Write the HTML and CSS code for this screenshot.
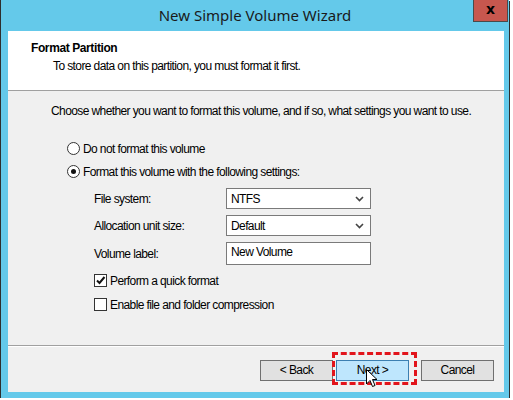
FILE: index.html
```html
<!DOCTYPE html>
<html lang="en">
<head>
    <meta charset="UTF-8">
    <title>New Simple Volume Wizard</title>
    <link rel="stylesheet" href="styles.css">
</head>
<body>
    <div class="window">
        <div class="titlebar">
            <span></span>
            <span class="title">New Simple Volume Wizard</span>
            <span class="close-btn">x</span>
        </div>

        <div class="client">
            <div class="wizard-header">
                <div class="header-title">Format Partition</div>
                <div class="header-sub">To store data on this partition, you must format it first.</div>
            </div>

            <div class="wizard-body">
                <p class="intro">Choose whether you want to format this volume, and if so, what settings you want to use.</p>

                <div class="option">
                    <span class="radio"></span>
                    <span>Do not format this volume</span>
                </div>
                <div class="option">
                    <span class="radio checked"></span>
                    <span>Format this volume with the following settings:</span>
                </div>

                <div class="settings">
                    <div class="field">
                        <span class="field-label">File system:</span>
                        <div class="combo">
                            <span>NTFS</span>
                            <svg class="chev" width="9" height="6" viewBox="0 0 9 6"><path d="M1 1 L4.5 4.5 L8 1" fill="none" stroke="#444" stroke-width="1.6"/></svg>
                        </div>
                    </div>
                    <div class="field">
                        <span class="field-label">Allocation unit size:</span>
                        <div class="combo">
                            <span>Default</span>
                            <svg class="chev" width="9" height="6" viewBox="0 0 9 6"><path d="M1 1 L4.5 4.5 L8 1" fill="none" stroke="#444" stroke-width="1.6"/></svg>
                        </div>
                    </div>
                    <div class="field">
                        <span class="field-label">Volume label:</span>
                        <div class="textbox">New Volume</div>
                    </div>

                    <div class="check-row first">
                        <span class="checkbox">
                            <svg width="11" height="11" viewBox="0 0 11 11"><path d="M2 5.5 L4.5 8 L9.5 2" fill="none" stroke="#111" stroke-width="2"/></svg>
                        </span>
                        <span>Perform a quick format</span>
                    </div>
                    <div class="check-row">
                        <span class="checkbox"></span>
                        <span>Enable file and folder compression</span>
                    </div>
                </div>
            </div>

            <div class="wizard-footer">
                <span class="btn">&lt; Back</span>
                <span class="next-wrap">
                    <span class="btn btn-default">Next &gt;</span>
                    <span class="highlight"></span>
                    <svg class="cursor" width="13" height="20" viewBox="0 0 13 20">
                        <path d="M0.5 0.5 L0.5 15 L4 11.5 L6.5 17.5 L9 16.5 L6.5 10.5 L11 10.5 Z" fill="#fff" stroke="#000" stroke-width="1"/>
                    </svg>
                </span>
                <span class="btn">Cancel</span>
            </div>
        </div>
    </div>
</body>
</html>
```

FILE: styles.css
```css
/* Ventana del asistente */
body, html {
    margin: 0;
    padding: 0;
    background-color: #ffffff;
    font-family: "Liberation Sans", Arial, sans-serif;
    font-size: 12px;
    letter-spacing: -0.6px;
    color: #000;
}

.window {
    width: 508px;
    height: 398px;
    background-color: #64c9ea;
    border-left: 1px solid #2e2e2e;
    box-shadow: 1px 1px 0 #2e2e2e;
    display: flex;
    flex-direction: column;
}

/* Barra de titulo */
.titlebar {
    height: 31px;
    display: grid;
    grid-template-columns: 1fr auto 1fr;
    align-items: start;
}

.title {
    font-family: "Noto Sans", sans-serif;
    font-size: 15px;
    letter-spacing: 0;
    color: #1a1a1a;
    line-height: 30px;
}

.close-btn {
    justify-self: end;
    width: 33px;
    height: 21px;
    margin-right: 1px;
    background-color: #c7574e;
    border: 1px solid #4a4a4a;
    border-top: 0;
    color: #000;
    font-family: "DejaVu Sans", sans-serif;
    font-weight: bold;
    font-size: 14px;
    letter-spacing: 0;
    line-height: 19px;
    text-align: center;
}

/* Area cliente */
.client {
    flex: 1;
    margin: 0 5px 6px 7px;
    background-color: #f0f0f0;
    display: flex;
    flex-direction: column;
}

.wizard-header {
    height: 60px;
    background-color: #ffffff;
    border-bottom: 1px solid #a0a0a0;
    padding: 9px 0 0 23px;
    box-sizing: border-box;
}

.header-title {
    font-weight: bold;
    line-height: 16px;
    letter-spacing: -0.4px;
}

.header-sub {
    padding-left: 22px;
    margin-top: 3px;
}

.wizard-body {
    flex: 1;
    padding: 0 0 0 43px;
}

.intro {
    margin: 13px 0 24px 0;
}

.option {
    display: flex;
    align-items: center;
    margin-left: 16px;
    height: 13px;
    margin-bottom: 10px;
}

.radio {
    width: 11px;
    height: 11px;
    border: 1px solid #333;
    border-radius: 50%;
    background-color: #fff;
    margin-right: 3px;
    display: flex;
    align-items: center;
    justify-content: center;
}

.radio.checked::after {
    content: "";
    width: 5px;
    height: 5px;
    border-radius: 50%;
    background-color: #111;
}

.settings {
    margin-left: 43px;
}

.field {
    display: flex;
    align-items: center;
    margin-bottom: 6px;
}

.field-label {
    width: 132px;
}

.combo, .textbox {
    width: 145px;
    height: 21px;
    border: 1px solid #7a7a7a;
    background-color: #fff;
    display: flex;
    align-items: center;
    justify-content: space-between;
    padding: 0 6px 0 4px;
    box-sizing: border-box;
}

.textbox {
    height: 23px;
    align-items: flex-start;
    padding-top: 2px;
}

.chev {
    display: block;
}

.check-row {
    display: flex;
    align-items: center;
    height: 13px;
    margin-bottom: 11px;
}

.check-row.first {
    margin-top: 9px;
}

.checkbox {
    width: 11px;
    height: 11px;
    border: 1px solid #333;
    background-color: #fff;
    margin-right: 3px;
    display: flex;
    align-items: center;
    justify-content: center;
}

/* Pie con botones */
.wizard-footer {
    height: 47px;
    box-sizing: border-box;
    border-top: 1px solid #a0a0a0;
    box-shadow: inset 0 1px 0 #fff;
    display: flex;
    justify-content: flex-end;
    align-items: flex-start;
    padding: 14px 10px 0 0;
}

.btn {
    width: 71px;
    height: 19px;
    border: 1px solid #707070;
    background-color: #e1e1e1;
    text-align: center;
    line-height: 19px;
    display: inline-block;
}

.btn-default {
    border-color: #3c7fb1;
    background-color: #bee6fd;
}

.next-wrap {
    position: relative;
    display: inline-block;
    margin: 0 12px 0 3px;
}

.highlight {
    position: absolute;
    left: -4px;
    top: -8px;
    right: -8px;
    bottom: -4px;
    border: 3px dashed #e2141b;
}

.cursor {
    position: absolute;
    left: 30px;
    top: 9px;
}
```
